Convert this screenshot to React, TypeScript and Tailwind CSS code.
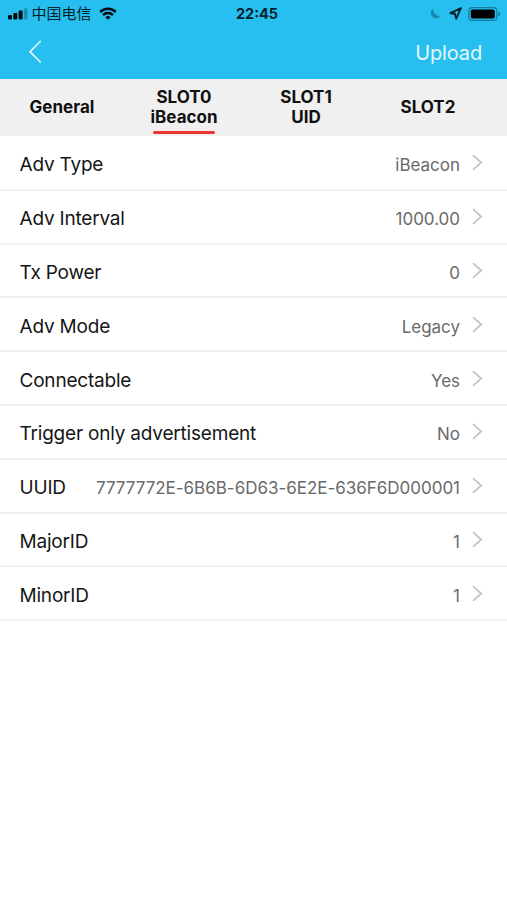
const tabs = [
  { lines: ["General"] },
  { lines: ["SLOT0", "iBeacon"], active: true },
  { lines: ["SLOT1", "UID"] },
  { lines: ["SLOT2"] },
]

const rows = [
  { label: "Adv Type", value: "iBeacon" },
  { label: "Adv Interval", value: "1000.00" },
  { label: "Tx Power", value: "0" },
  { label: "Adv Mode", value: "Legacy" },
  { label: "Connectable", value: "Yes" },
  { label: "Trigger only advertisement", value: "No" },
  { label: "UUID", value: "7777772E-6B6B-6D63-6E2E-636F6D000001" },
  { label: "MajorID", value: "1" },
  { label: "MinorID", value: "1" },
]

function StatusBar() {
  return (
    <div className="grid h-[27px] grid-cols-3 items-center pl-2 pr-[6px] text-[#06222c]">
      <div className="flex items-center">
        <svg width="20" height="12" viewBox="0 0 20 12" fill="#020d12">
          <rect x="0" y="7" width="4" height="4.5" rx="1" />
          <rect x="5.3" y="5" width="4" height="6.5" rx="1" />
          <rect x="10.6" y="2.6" width="4" height="8.9" rx="1" />
          <rect x="16" y="0.2" width="3.6" height="11.3" rx="1" opacity="0.28" />
        </svg>
        <span className="ml-[3.5px] whitespace-nowrap pt-px text-[15px] leading-[20px]">中国电信</span>
        <svg className="ml-[7px] shrink-0" width="18" height="13" viewBox="0 0 18 13" fill="none" stroke="#020d12" strokeWidth="2.5">
          <path d="M1.2 5A11 11 0 0 1 16.8 5" />
          <path d="M4 8.1A7 7 0 0 1 14 8.1" />
          <path d="M9 12.8L6.4 10.3A3.4 3.4 0 0 1 11.6 10.3Z" fill="#020d12" stroke="none" />
        </svg>
      </div>
      <div className="pl-[5px] text-center text-[14.5px] font-bold">22:45</div>
      <div className="flex items-center justify-end">
        <svg width="11" height="11" viewBox="0 0 11 11" fill="#1787ab">
          <path d="M3.2 0.4A5.4 5.4 0 1 0 10.8 7.8A6.6 6.6 0 0 1 3.2 0.4Z" />
        </svg>
        <svg className="ml-[8px]" width="13" height="13" viewBox="0 0 13 13" fill="none" stroke="#04202a" strokeWidth="1.9" strokeLinejoin="round">
          <path d="M11.9 1.1L1.4 6.2L5.9 6.8L7.3 11.7Z" />
        </svg>
        <svg className="ml-[6px]" width="33" height="14" viewBox="0 0 33 14">
          <rect x="0.8" y="0.7" width="28" height="12.6" rx="3.4" fill="none" stroke="#147c9f" strokeWidth="1.2" />
          <rect x="2.8" y="2.6" width="24" height="8.8" rx="1.6" fill="#000" />
          <path d="M30.3 4.6Q32.3 5.3 32.3 7T30.3 9.4Z" fill="#147c9f" />
        </svg>
      </div>
    </div>
  )
}

function Header() {
  return (
    <header className="h-[79px] bg-[#27bfef]">
      <StatusBar />
      <div className="flex h-[50px] items-center justify-between pl-[28px] pr-[25px] text-white">
        <svg width="14" height="24" viewBox="0 0 14 24" fill="none" stroke="#e0f7ff" strokeWidth="1.7">
          <path d="M12.7 1L2 11.7L12.7 22.5" />
        </svg>
        <button className="pt-px text-[20px] leading-6 tracking-[-0.15px] text-[#e5f8fe]">Upload</button>
      </div>
    </header>
  )
}

function Tabs() {
  return (
    <nav className="flex h-[57px] bg-[#f0f0f0] pl-[1px]">
      {tabs.map((tab) => (
        <button
          key={tab.lines[0]}
          className="relative flex w-[122px] flex-col items-center justify-center pb-px text-[17px] leading-[20px] font-bold text-[#111]"
        >
          {tab.lines.map((line) => (
            <span key={line}>{line}</span>
          ))}
          {tab.active && <span className="absolute bottom-[2px] h-[3px] w-[62px] rounded-sm bg-[#ee3333]" />}
        </button>
      ))}
    </nav>
  )
}

function SettingRow({ label, value }: { label: string; value: string }) {
  return (
    <li className="flex h-[53.8px] items-center border-b-2 border-[#f1f1f1] pl-[19.5px] pr-[24px]">
      <span className="pt-[5px] text-[19px] leading-6 tracking-[-0.2px] text-[#161616]">{label}</span>
      <span className="ml-auto pt-[5px] text-[17px] leading-6 tracking-[-0.02px] text-[#6a6a6a]">{value}</span>
      <svg className="ml-[12px]" width="11" height="17" viewBox="0 0 11 17" fill="none" stroke="#c4c4c6" strokeWidth="1.8">
        <path d="M1 1.2L9.2 8.5L1 15.8" />
      </svg>
    </li>
  )
}

export default function App() {
  return (
    <div className="min-h-screen bg-white font-['Inter','Noto_Sans_CJK_SC',sans-serif]">
      <Header />
      <Tabs />
      <ul className="pt-px">
        {rows.map((row) => (
          <SettingRow key={row.label} label={row.label} value={row.value} />
        ))}
      </ul>
    </div>
  )
}
